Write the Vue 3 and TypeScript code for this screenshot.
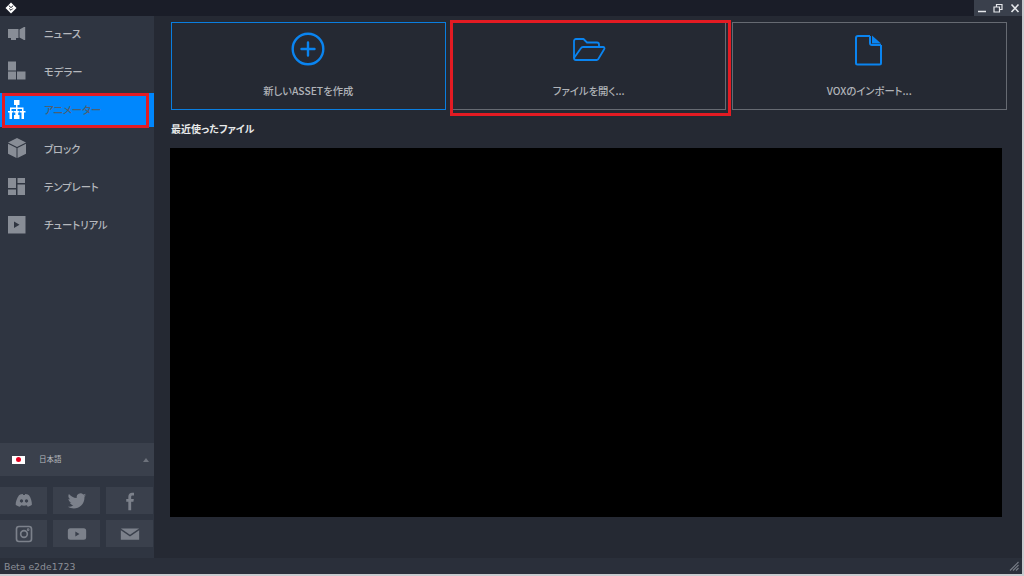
<script setup lang="ts">
interface NavItem { label: string; icon: string; active?: boolean }
const nav: NavItem[] = [
  { label: 'ニュース', icon: 'news' },
  { label: 'モデラー', icon: 'modeler' },
  { label: 'アニメーター', icon: 'anim', active: true },
  { label: 'ブロック', icon: 'block' },
  { label: 'テンプレート', icon: 'template' },
  { label: 'チュートリアル', icon: 'tutorial' },
]
const socials = ['discord', 'twitter', 'facebook', 'instagram', 'youtube', 'mail']
</script>

<template>
  <div class="app">
    <header class="titlebar">
      <svg class="logo" viewBox="0 0 12 12" width="12" height="12">
        <path d="M6 .5 11.500 6 6 11.500.5 6Z" fill="#fff" />
        <path d="M3.800 3.600 6 5.600 8.200 3.600M4.200 6.500 6 8.300 7.800 6.500" fill="none" stroke="#1a1d28" stroke-width="1" />
      </svg>
      <div class="winctl">
        <svg viewBox="0 0 48 16" width="48" height="16">
          <path d="M4 11.500h8" stroke="#e4e6ea" stroke-width="1.500" />
          <path d="M20 7h5.500v5H20ZM22.500 7V4.500H28V9.500h-2.500" fill="none" stroke="#e4e6ea" stroke-width="1.200" />
          <path d="M37.500 4.500l7 7.500M44.500 4.500l-7 7.500" stroke="#e4e6ea" stroke-width="1.600" />
        </svg>
      </div>
    </header>

    <div class="body">
      <aside class="sidebar">
        <nav class="nav">
          <div v-for="item in nav" :key="item.label" class="nav-item" :class="{ active: item.active }">
            <svg class="nav-icon" viewBox="0 0 20 20" width="20" height="20">
              <g v-if="item.icon === 'news'" fill="#888d96">
                <path d="M0 6h10.500v9H0ZM3 15h5v2H3ZM11.500 6.500 16 4V17l-4.500-2.500Z" />
                <path d="M16 4h1.200v13H16Z" />
              </g>
              <g v-else-if="item.icon === 'modeler'" fill="#888d96">
                <path d="M0 .5h8v9H0ZM0 10.500h8v8H0ZM9 10.500h8.500v8H9Z" />
              </g>
              <g v-else-if="item.icon === 'anim'" fill="#fff">
                <path d="M6 0h5.500v5H6ZM8 5h1.500v3H8ZM2 7.500h13.500v1.500H2ZM2 8.500h1.500V11H2ZM8 8.500h1.500V11H8ZM14 8.500h1.500V11H14Z" />
                <path d="M0 11h5.500v1.500H4V19H1.500V12.500H0ZM6 11h5.500v1.500H10.200V15H11.500v4H6v-4h1.300V12.500H6ZM12 11h5.500v1.500H16V19h-2.500V12.500H12Z" />
              </g>
              <g v-else-if="item.icon === 'block'" fill="#888d96">
                <path d="M9 0 18 4.500 9 9 0 4.500Z" />
                <path d="M0 5.800 8.500 10V20L0 15.800ZM18 5.800V15.800L9.500 20V10Z" />
              </g>
              <g v-else-if="item.icon === 'template'" fill="#888d96">
                <path d="M0 1h8v10H0ZM0 12.500h8V18H0ZM9.500 1H17V6H9.500ZM9.500 7.500H17V18H9.500Z" />
              </g>
              <g v-else>
                <path d="M0 1h17.500v17.500H0Z" fill="#888d96" />
                <path d="M6 6.500v6.500L11.500 9.750Z" fill="#2f3541" />
              </g>
            </svg>
            <span class="nav-label">{{ item.label }}</span>
          </div>
        </nav>

        <div class="spacer"></div>

        <div class="lang">
          <span class="flag"><i></i></span>
          <span class="lang-label">日本語</span>
          <span class="caret"></span>
        </div>

        <div class="socials">
          <div v-for="s in socials" :key="s" class="social">
            <svg viewBox="0 0 24 24" width="20" height="20" fill="#7c818b">
              <path v-if="s === 'discord'" d="M6 5c2-1 4-1.300 4.500-1.300l.5 1.200c.7-.1 1.300-.1 2 0l.5-1.200c.5 0 2.500.3 4.500 1.300 2.500 3.700 3.500 7.500 3.500 11.500-1.500 1.300-3.500 2.200-5 2.500l-1.200-1.800c-2 .5-4.600.5-6.600 0L7 19c-1.500-.3-3.500-1.200-5-2.500C2 12.500 3.500 8.700 6 5Z M9 10a2 2 0 1 0 .01 0Zm6 0a2 2 0 1 0 .01 0Z" fill-rule="evenodd" />
              <path v-else-if="s === 'twitter'" d="M23 5c-.8.4-1.700.6-2.600.7.900-.6 1.600-1.400 2-2.500-.9.500-1.800.9-2.900 1.100a4.600 4.600 0 0 0-7.800 4.200C7.900 8.300 4.500 6.500 2.300 3.700c-1.200 2.100-.6 4.800 1.400 6.100-.7 0-1.400-.2-2-.6 0 2.200 1.500 4.100 3.700 4.600-.7.200-1.400.2-2.100.1.600 1.800 2.300 3.100 4.300 3.200A9.300 9.300 0 0 1 1 19c8.400 5 20.300.5 20-12.300.8-.5 1.500-1.100 2-1.700Z" />
              <path v-else-if="s === 'facebook'" d="M10 23V13H7.500V9.500H10V7c0-3.500 2-5 4.500-5 1.300 0 2 .1 2.300.2v3.300h-1.600c-1.500 0-1.800.8-1.800 1.800v2.200h3.200l-.5 3.500h-2.700v10Z" />
              <g v-else-if="s === 'instagram'" fill="none" stroke="#7c818b" stroke-width="2">
                <rect x="3" y="3" width="18" height="18" rx="3" />
                <circle cx="12" cy="12" r="4" />
                <circle cx="17" cy="6.800" r=".6" />
              </g>
              <path v-else-if="s === 'youtube'" fill-rule="evenodd" d="M4 5h16a3 3 0 0 1 3 3v8a3 3 0 0 1-3 3H4a3 3 0 0 1-3-3V8a3 3 0 0 1 3-3Zm6 4v6l5-3Z" />
              <g v-else>
                <path d="M1 5.500h22L12 13Z" />
                <path d="M1 7.500 12 15 23 7.500V19H1Z" />
              </g>
            </svg>
          </div>
        </div>
      </aside>

      <main class="main">
        <section class="cards">
          <div class="card primary">
            <svg viewBox="0 0 34 34" width="34" height="34" fill="none" stroke="#0a84f0" stroke-width="2.400">
              <circle cx="17" cy="17" r="15.300" />
              <path d="M17 10.500v13M10.500 17h13" stroke-linecap="round" />
            </svg>
            <span>新しいASSETを作成</span>
          </div>
          <div class="card">
            <svg viewBox="0 0 34 34" width="34" height="34" fill="none" stroke="#0a84f0" stroke-width="1.800" stroke-linejoin="round">
              <path d="M2 26V9a2 2 0 0 1 2-2h7.500l3.500 3.500h10a2 2 0 0 1 2 2v2" />
              <path d="M2 26c0 1 .8 2 2 2h20.500a2 2 0 0 0 1.800-1l6-10a1.300 1.300 0 0 0-1.200-2H11a2.500 2.500 0 0 0-2.100 1.200Z" />
            </svg>
            <span>ファイルを開く...</span>
          </div>
          <div class="card">
            <svg viewBox="0 0 34 34" width="34" height="34" fill="none" stroke="#0a84f0" stroke-width="2">
              <path d="M18 4H6a2 2 0 0 0-2 2v25a1.500 1.500 0 0 0 1.500 1.500h22a1.500 1.500 0 0 0 1.500-1.500V13" />
              <path d="M18 4v7a2 2 0 0 0 2 2h9" />
              <path d="M20 3.500 29 11.500H20Z" fill="#0a84f0" stroke="none" />
            </svg>
            <span>VOXのインポート...</span>
          </div>
        </section>
        <h2 class="recent-title">最近使ったファイル</h2>
        <div class="recent"></div>
      </main>
    </div>

    <footer class="status">
      <span>Beta e2de1723</span>
      <svg viewBox="0 0 10 10" width="10" height="10" class="grip">
        <path d="M9.500 1 1 9.500M9.500 4 4 9.500M9.500 7 7 9.500" stroke="#777c86" stroke-width="1.200" fill="none" />
      </svg>
    </footer>

    <div class="mark mark-nav"></div>
    <div class="mark mark-card"></div>
  </div>
</template>

<style>
html, body { margin: 0; background: #252933; }
</style>

<style scoped>
.app {
  position: relative;
  width: 1024px;
  height: 576px;
  overflow: hidden;
  display: flex;
  flex-direction: column;
  background: #252933;
  box-sizing: border-box;
  border-right: 2px solid #c9cbcf;
  border-bottom: 2px solid #c9cbcf;
  font-family: "Noto Sans CJK JP", "Noto Sans", sans-serif;
  font-feature-settings: "palt";
}
.titlebar {
  height: 16px;
  flex: none;
  background: #1a1d28;
  display: flex;
  align-items: center;
  justify-content: space-between;
  padding-left: 5px;
}
.winctl {
  width: 48px;
  height: 16px;
  background: #3a404c;
}
.winctl svg { display: block; }
.body {
  flex: 1;
  min-height: 0;
  display: flex;
}
.sidebar {
  width: 154px;
  flex: none;
  background: #2f3541;
  display: flex;
  flex-direction: column;
}
.nav {
  display: flex;
  flex-direction: column;
  gap: 4.400px;
}
.nav-item {
  height: 34px;
  display: flex;
  align-items: center;
  padding-left: 8px;
  gap: 16px;
}
.nav-item.active { background: #0087fd; }
.nav-label {
  font-size: 10.300px;
  font-weight: 500;
  color: #b5b8bd;
}
.nav-item.active .nav-label { color: #4f5f70; }
.spacer { flex: 1; }
.lang {
  height: 33px;
  background: #3a404c;
  display: flex;
  align-items: center;
  padding-left: 12px;
  margin-bottom: 11px;
}
.flag {
  width: 13px;
  height: 8px;
  background: #fff;
  display: flex;
  align-items: center;
  justify-content: center;
}
.flag i {
  display: block;
  width: 5px;
  height: 5px;
  border-radius: 50%;
  background: #e4001f;
}
.lang-label {
  font-size: 7.500px;
  line-height: 10px;
  margin-top: -2px;
  color: #b5b8bd;
  margin-left: 14px;
  flex: 1;
}
.caret {
  width: 0;
  height: 0;
  border-left: 3px solid transparent;
  border-right: 3px solid transparent;
  border-bottom: 4px solid #6d727c;
  margin-right: 5px;
}
.socials {
  display: grid;
  grid-template-columns: repeat(3, 47px);
  grid-auto-rows: 27px;
  gap: 6px;
  margin-bottom: 11px;
}
.social {
  background: #3a404c;
  display: flex;
  align-items: center;
  justify-content: center;
}
.main {
  flex: 1;
  min-width: 0;
  padding: 6px 16px 0;
}
.cards {
  display: grid;
  grid-template-columns: repeat(3, 274.500px);
  gap: 6px;
  margin-left: 1px;
}
.card {
  height: 88px;
  box-sizing: border-box;
  border: 1px solid #666a72;
  display: flex;
  flex-direction: column;
  align-items: center;
  padding-top: 9px;
  gap: 18px;
}
.card.primary { border-color: #0a7ee0; }
.card span {
  font-size: 10.300px;
  font-weight: 500;
  color: #b0b3b8;
  line-height: 14px;
}
.recent-title {
  margin: 11px 0 0 1px;
  font-size: 10px;
  line-height: 15px;
  font-weight: 700;
  color: #e8e9ea;
}
.recent {
  margin-top: 12px;
  width: 832px;
  height: 369px;
  background: #000;
}
.status {
  height: 16px;
  flex: none;
  background: #2a2f3a;
  display: flex;
  align-items: center;
  justify-content: space-between;
  padding: 0 3px 0 4px;
  font-family: "DejaVu Sans", sans-serif;
  font-size: 9.300px;
  color: #8a8e96;
}
.mark {
  position: absolute;
  box-sizing: border-box;
  border: 3px solid #e31b23;
  pointer-events: none;
}
.mark-nav { left: 2px; top: 93px; width: 147px; height: 35px; }
.mark-card { left: 450px; top: 20px; width: 281px; height: 96px; }
</style>
